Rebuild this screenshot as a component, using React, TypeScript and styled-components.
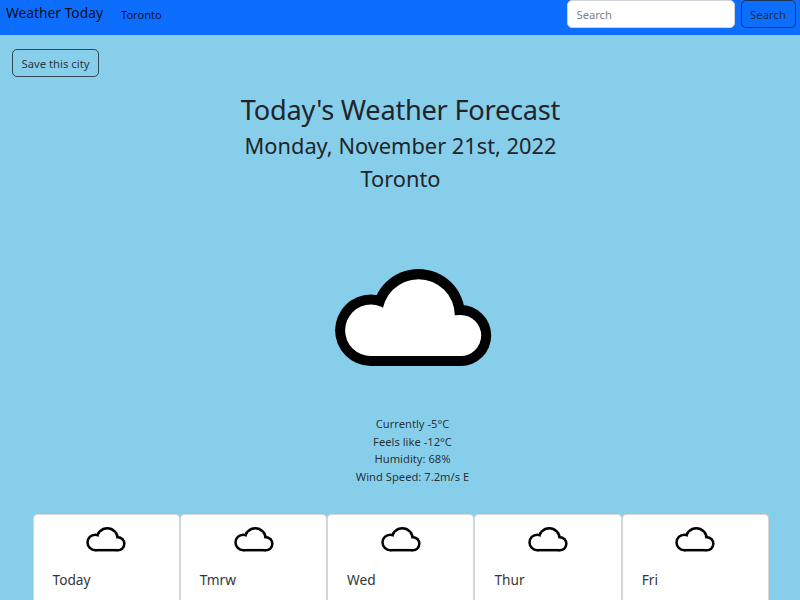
import React from "react";
import styled, { createGlobalStyle } from "styled-components";

const GlobalStyle = createGlobalStyle`
  *, *::before, *::after { box-sizing: border-box; }
  html, body { margin: 0; height: 600px; overflow: hidden; }
  body {
    background: #87ceeb;
    color: #212529;
    font-family: "Segoe UI", "Noto Sans", "Open Sans", sans-serif;
  }
`;

const Page = styled.div`
  display: flex;
  flex-direction: column;
  height: 600px;
  overflow: hidden;
`;

const NavBar = styled.nav`
  display: flex;
  align-items: flex-start;
  flex: none;
  height: 35px;
  padding: 0 4.5px 0 6px;
  background: #0d6efd;
`;

const Brand = styled.a`
  width: 115px;
  color: rgba(0, 0, 0, 0.9);
  font-size: 13.8px;
  line-height: 25px;
  white-space: nowrap;
`;

const NavLink = styled.a`
  color: rgba(0, 0, 0, 0.88);
  font-size: 11.1px;
  line-height: 30px;
`;

const SearchForm = styled.form`
  display: flex;
  gap: 5.5px;
  margin-left: auto;
`;

const SearchInput = styled.input`
  width: 168.5px;
  height: 28px;
  padding: 0 9px;
  border: 1px solid #ced4da;
  border-radius: 5px;
  background: #fff;
  font: 11.2px "Segoe UI", "Noto Sans", sans-serif;
  &::placeholder { color: #7b8186; opacity: 1; }
`;

const OutlineButton = styled.button<{ $width: number }>`
  width: ${(p) => p.$width}px;
  height: 28px;
  padding: 1px 0 0;
  border: 1px solid rgba(33, 37, 41, 0.8);
  border-radius: 5px;
  background: transparent;
  color: rgba(33, 37, 41, 0.92);
  font: 11.3px "Segoe UI", "Noto Sans", sans-serif;
  white-space: nowrap;
`;

const SaveRow = styled.div`
  padding: 14px 12px 0;
  height: 57px;
  flex: none;
`;

const Heading = styled.header`
  display: flex;
  flex-direction: column;
  align-items: center;
  height: 162px;
  flex: none;
  padding-left: 1px;
`;

const Title = styled.h1`
  margin: 0 0 1px;
  font-size: 27.2px;
  font-weight: 400;
  letter-spacing: -0.25px;
  line-height: 36px;
`;

const Subtitle = styled.h2`
  margin: 0;
  font-size: 21.8px;
  font-weight: 400;
  line-height: 33px;
`;

const Current = styled.section`
  display: flex;
  flex-direction: column;
  align-items: center;
  flex: none;
  height: 259.5px;
  padding: 15px 0 0 25px;
`;

const Readings = styled.div`
  margin-top: 48.3px;
  text-align: center;
  color: rgba(33, 37, 41, 0.94);
  font-size: 11.2px;
  line-height: 17.5px;
`;

const Forecast = styled.section`
  display: grid;
  grid-template-columns: repeat(5, 1fr);
  flex: none;
  width: 736.5px;
  height: 120px;
  margin-left: 32.5px;
`;

const DayCard = styled.article`
  display: flex;
  flex-direction: column;
  align-items: center;
  padding-top: 12px;
  border: 1px solid rgba(0, 0, 0, 0.16);
  border-radius: 4.5px;
  background: #fff;
`;

const DayName = styled.h5`
  align-self: flex-start;
  margin: 17.6px 0 0 19px;
  color: #33373b;
  font-size: 13.7px;
  font-weight: 400;
  line-height: 22px;
`;

const CloudSvg = styled.svg`
  display: block;
  flex: none;
  overflow: visible;
`;

function Cloud({ width }: { width: number }) {
  return (
    <CloudSvg width={width} height={(width * 98) / 158} viewBox="0 0 158 98">
      <g fill="#000">
        <circle cx="36.8" cy="61.3" r="35.7" />
        <circle cx="84.5" cy="46.5" r="46.5" />
        <circle cx="126.7" cy="66.5" r="30.5" />
        <rect x="36.8" y="50" width="89.9" height="47" />
      </g>
      <g fill="#fff">
        <circle cx="36.8" cy="61.3" r="25.7" />
        <circle cx="84.5" cy="46.5" r="36.3" />
        <circle cx="126.7" cy="66.5" r="20.5" />
        <rect x="36.8" y="46.3" width="89.9" height="40.7" />
      </g>
    </CloudSvg>
  );
}

const days = ["Today", "Tmrw", "Wed", "Thur", "Fri"];

export default function App() {
  return (
    <Page>
      <GlobalStyle />
      <NavBar>
        <Brand>Weather Today</Brand>
        <NavLink>Toronto</NavLink>
        <SearchForm>
          <SearchInput placeholder="Search" />
          <OutlineButton type="button" $width={55}>Search</OutlineButton>
        </SearchForm>
      </NavBar>
      <SaveRow>
        <OutlineButton type="button" $width={87}>Save this city</OutlineButton>
      </SaveRow>
      <Heading>
        <Title>Today's Weather Forecast</Title>
        <Subtitle>Monday, November 21st, 2022</Subtitle>
        <Subtitle>Toronto</Subtitle>
      </Heading>
      <Current>
        <Cloud width={158} />
        <Readings>
          <div>Currently -5°C</div>
          <div>Feels like -12°C</div>
          <div>Humidity: 68%</div>
          <div>Wind Speed: 7.2m/s E</div>
        </Readings>
      </Current>
      <Forecast>
        {days.map((day) => (
          <DayCard key={day}>
            <Cloud width={39.8} />
            <DayName>{day}</DayName>
          </DayCard>
        ))}
      </Forecast>
    </Page>
  );
}
